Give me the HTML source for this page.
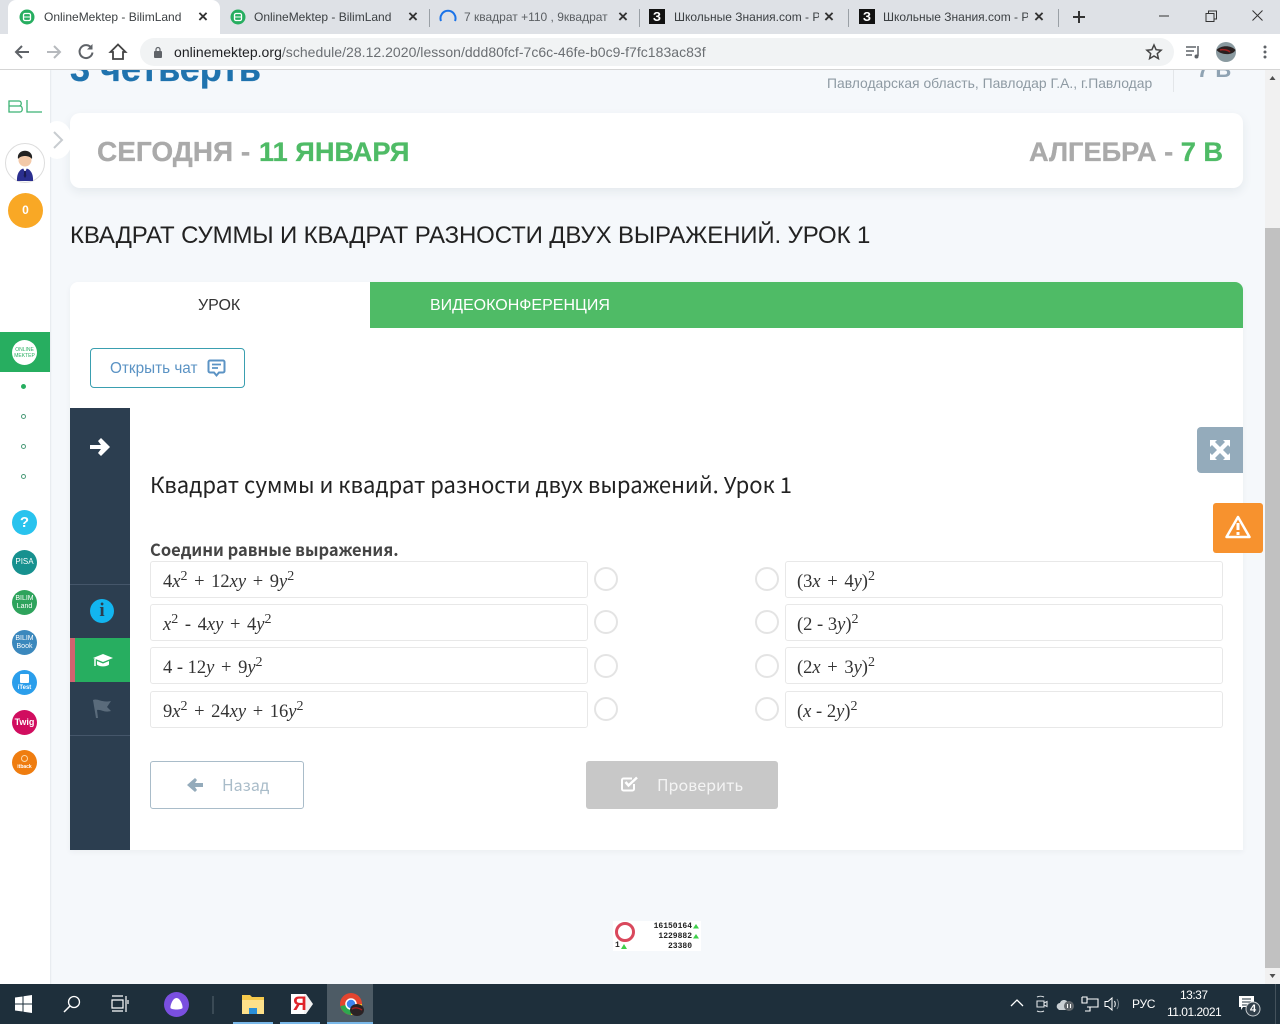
<!DOCTYPE html>
<html><head><meta charset="utf-8"><style>
html,body{margin:0;padding:0;width:1280px;height:1024px;overflow:hidden;background:#f5f8fb;font-family:"Liberation Sans","Noto Sans CJK SC",sans-serif}
.a{position:absolute}
.t{position:absolute;white-space:nowrap}
.tab{position:absolute;top:10px;font-size:12px;color:#3c4043;white-space:nowrap;line-height:14px}
.x{position:absolute;top:8px;font-size:17px;font-weight:bold;color:#333;line-height:18px}
.sep{position:absolute;top:9px;width:1px;height:18px;background:#9aa0a6}
.box{position:absolute;height:35px;background:#fff;border:1px solid #e8e8e8;border-radius:3px;box-sizing:content-box}
.m{position:absolute;left:12px;top:9px;font:18.5px/22px "Liberation Serif",serif;word-spacing:2px;color:#333;white-space:nowrap}
.m i{font-style:italic}
.m sup{font-size:14px;line-height:0;vertical-align:7px}
.n{margin:0 -2px}
.r{position:absolute;width:20px;height:20px;border:2px solid #e4e4e4;border-radius:50%;background:#fff}
.c{position:absolute;width:25px;height:25px;left:12px;border-radius:50%;color:#fff;text-align:center;font-size:7px;line-height:25px;overflow:hidden}
.d{position:absolute;left:21px;border-radius:50%;border:1.5px solid #4a9a78;box-sizing:content-box;width:3px;height:3px}
.tb{letter-spacing:-.5px}
</style></head><body>
<!-- page -->
<div class="a" style="left:0;top:70px;width:1265px;height:914px;background:#f5f8fb;overflow:hidden">
<div class="t" style="left:70px;top:-23px;font-size:36px;font-weight:bold;color:#1f73ae;line-height:44px;-webkit-text-stroke:.3px #1f73ae">3 четверть</div>
<div class="t" style="left:827px;top:4px;font-size:13.9px;color:#8e9aa3;line-height:18px">Павлодарская область, Павлодар Г.А., г.Павлодар</div>
<div class="a" style="left:1173px;top:0;width:1px;height:22px;background:#e3e6e9"></div>
<div class="t" style="left:1197px;top:-13px;font-size:22px;font-weight:bold;color:#8fa3b3;line-height:26px">7 В</div>
</div>
<div class="a" style="left:70px;top:113px;width:1173px;height:75px;background:#fff;border-radius:10px;box-shadow:0 4px 10px rgba(40,60,80,.08)"></div>
<div class="t" style="left:97px;top:136px;font-size:28px;font-weight:bold;color:#aaa;line-height:32px;-webkit-text-stroke:.3px #aaa">СЕГОДНЯ - <span style="color:#4fbb66;-webkit-text-stroke:.3px #4fbb66;font-size:27.2px;margin-left:1px">11 ЯНВАРЯ</span></div>
<div class="t" style="right:57px;top:136px;font-size:27.2px;font-weight:bold;color:#aaa;line-height:32px;-webkit-text-stroke:.3px #aaa">АЛГЕБРА - <span style="color:#4fbb66;-webkit-text-stroke:.3px #4fbb66">7 В</span></div>
<div class="t" style="left:70px;top:222px;font-size:24px;color:#222;line-height:28px;letter-spacing:-.13px">КВАДРАТ СУММЫ И КВАДРАТ РАЗНОСТИ ДВУХ ВЫРАЖЕНИЙ. УРОК 1</div>
<!-- card -->
<div class="a" style="left:70px;top:282px;width:1173px;height:568px;background:#fff;border-radius:8px 8px 0 0;box-shadow:0 2px 6px rgba(40,60,80,.05)"></div>
<div class="a" style="left:370px;top:282px;width:873px;height:46px;background:#4fbb66;border-radius:0 8px 0 0"></div>
<div class="t" style="left:198px;top:297px;font-size:16px;color:#333;line-height:18px">УРОК</div>
<div class="t" style="left:430px;top:297px;font-size:16px;color:#fff;line-height:18px">ВИДЕОКОНФЕРЕНЦИЯ</div>
<div class="a" style="left:90px;top:348px;width:153px;height:38px;border:1px solid #3a9fb0;border-radius:4px"></div>
<div class="t" style="left:110px;top:360px;font-size:15.3px;color:#5b93c4;line-height:18px">Открыть чат</div>
<svg class="a" style="left:207px;top:359px" width="19" height="19" viewBox="0 0 19 19"><path d="M3 1.500h13a1.500 1.500 0 0 1 1.500 1.500v9a1.500 1.500 0 0 1-1.500 1.500h-4l-2.500 3-2.500-3H3A1.500 1.500 0 0 1 1.500 12V3A1.500 1.500 0 0 1 3 1.500z" fill="none" stroke="#5b93c4" stroke-width="2"/><path d="M5 5.500h9M5 9h6" stroke="#5b93c4" stroke-width="1.800"/></svg>
<!-- dark rail -->
<div class="a" style="left:70px;top:408px;width:60px;height:442px;background:#2c3e50"></div>
<svg class="a" style="left:89px;top:437px" width="22" height="20" viewBox="0 0 22 20"><path d="M1 8h11l-3-4 3-3 9 9-9 9-3-3 3-4H1z" fill="#fff"/></svg>
<div class="a" style="left:70px;top:584px;width:60px;height:1px;background:#45566a"></div>
<div class="a" style="left:90px;top:599px;width:24px;height:24px;border-radius:50%;background:#12b5f0;color:#2c3e50;font:bold 19px/24px 'Liberation Serif',serif;text-align:center">i</div>
<div class="a" style="left:70px;top:638px;width:60px;height:44px;background:#27ae60"></div>
<div class="a" style="left:70px;top:638px;width:5px;height:44px;background:#d2626f"></div>
<svg class="a" style="left:92px;top:653px" width="22" height="17" viewBox="0 0 22 17"><path d="M11 1 21 5l-10 4L1 5z" fill="#fff"/><path d="M5 8v3.500c2 2.500 10 2.500 12 0V8l-6 2.500z" fill="#fff"/><path d="M3 6v7" stroke="#fff" stroke-width="1.500"/></svg>
<svg class="a" style="left:91px;top:698px" width="22" height="22" viewBox="0 0 22 22"><path d="M2 2c5-2 8 3 18 1l-4 6 4 4c-7 2-10-2-14-1l1 8H5z" fill="#5a6b7b"/></svg>
<div class="a" style="left:70px;top:735px;width:60px;height:1px;background:#45566a"></div>
<div class="a" style="left:1197px;top:427px;width:46px;height:46px;background:#94abbb;border-radius:4px 0 0 4px"></div>
<svg class="a" style="left:1209px;top:439px" width="22" height="22" viewBox="0 0 22 22"><path d="M1 1h7L6 3l5 5 5-5-2-2h7v7l-2-2-5 5 5 5 2-2v7h-7l2-2-5-5-5 5 2 2H1v-7l2 2 5-5-5-5-2 2z" fill="#fff"/></svg>
<div class="a" style="left:1213px;top:503px;width:50px;height:50px;background:#f7922e;border-radius:3px"></div>
<svg class="a" style="left:1225px;top:515px" width="26" height="24" viewBox="0 0 26 24"><path d="M13 2 24.500 22h-23z" fill="none" stroke="#fff" stroke-width="2.500" stroke-linejoin="round"/><path d="M13 8v7M13 17v3" stroke="#fff" stroke-width="3"/></svg>
<!-- content -->
<div class="t" style="left:150px;top:469px;font-size:22px;color:#222;line-height:30px;font-family:'Noto Sans CJK SC','Liberation Sans',sans-serif">Квадрат суммы и квадрат разности двух выражений. Урок 1</div>
<div class="t" style="left:150px;top:539px;font-size:16.5px;font-weight:bold;color:#444;line-height:20px;font-family:'Noto Sans CJK SC','Liberation Sans',sans-serif">Соедини равные выражения.</div>
<div class="box" style="left:150px;top:561px;width:436px"><div class="m">4<i>x</i><sup>2</sup> + 12<i>xy</i> + 9<i>y</i><sup>2</sup></div></div>
<div class="box" style="left:150px;top:604px;width:436px"><div class="m"><i>x</i><sup>2</sup> - 4<i>xy</i> + 4<i>y</i><sup>2</sup></div></div>
<div class="box" style="left:150px;top:647px;width:436px"><div class="m">4<span class="n"> - </span>12<i>y</i> + 9<i>y</i><sup>2</sup></div></div>
<div class="box" style="left:150px;top:691px;width:436px"><div class="m">9<i>x</i><sup>2</sup> + 24<i>xy</i> + 16<i>y</i><sup>2</sup></div></div>
<div class="box" style="left:785px;top:561px;width:436px"><div class="m" style="left:11px">(3<i>x</i> + 4<i>y</i>)<sup>2</sup></div></div>
<div class="box" style="left:785px;top:604px;width:436px"><div class="m" style="left:11px">(2<span class="n"> - </span>3<i>y</i>)<sup>2</sup></div></div>
<div class="box" style="left:785px;top:647px;width:436px"><div class="m" style="left:11px">(2<i>x</i> + 3<i>y</i>)<sup>2</sup></div></div>
<div class="box" style="left:785px;top:691px;width:436px"><div class="m" style="left:11px">(<i>x</i><span class="n"> - </span>2<i>y</i>)<sup>2</sup></div></div>
<div class="r" style="left:594px;top:567px"></div><div class="r" style="left:594px;top:610px"></div><div class="r" style="left:594px;top:654px"></div><div class="r" style="left:594px;top:697px"></div>
<div class="r" style="left:755px;top:567px"></div><div class="r" style="left:755px;top:610px"></div><div class="r" style="left:755px;top:654px"></div><div class="r" style="left:755px;top:697px"></div>
<div class="a" style="left:150px;top:761px;width:152px;height:46px;border:1px solid #a9bcc9;border-radius:3px;background:#fff"></div>
<svg class="a" style="left:187px;top:778px" width="17" height="14" viewBox="0 0 17 14"><path d="M16 5H8l2-3-2-2-8 7 8 7 2-2-2-3h8z" fill="#94abbb"/></svg>
<div class="t" style="left:222px;top:774px;font-size:16px;color:#a9bcc9;line-height:20px;font-family:'Noto Sans CJK SC','Liberation Sans',sans-serif">Назад</div>
<div class="a" style="left:586px;top:761px;width:192px;height:48px;background:#c8c8c8;border-radius:3px"></div>
<svg class="a" style="left:621px;top:776px" width="18" height="16" viewBox="0 0 18 16"><path d="M13 8v5a1.500 1.500 0 0 1-1.500 1.500h-9A1.500 1.500 0 0 1 1 13V4a1.500 1.500 0 0 1 1.500-1.500H11" fill="none" stroke="#fff" stroke-width="2"/><path d="m4.500 6 3 3.500L16 1.500" fill="none" stroke="#fff" stroke-width="2.500"/></svg>
<div class="t" style="left:657px;top:774px;font-size:16px;color:#f4f4f4;line-height:20px;font-family:'Noto Sans CJK SC','Liberation Sans',sans-serif">Проверить</div>
<!-- counter -->
<div class="a" style="left:613px;top:921px;width:88px;height:30px;background:#fff;border:0 solid #eee"></div>
<div class="a" style="left:615px;top:922px;width:14px;height:14px;border:3px solid #d9485c;border-radius:50%"></div>
<div class="t" style="right:588px;top:922px;font:bold 8px/10px 'Liberation Mono',monospace;color:#222;text-align:right">16150164<br>1229882<br>23380</div>
<div class="t" style="left:615px;top:941px;font:bold 8px/10px 'Liberation Mono',monospace;color:#222">1</div>
<svg class="a" style="left:620px;top:922px" width="80" height="28" viewBox="0 0 80 28"><path d="M73 6.500 76 2l3 4.500zM73 16.500 76 12l3 4.500z" fill="#3ecf4a"/><path d="M1 27l3-5 3 5z" fill="#3ecf4a"/></svg>
<!-- left sidebar -->
<div class="a" style="left:0;top:70px;width:50px;height:914px;background:#fff;box-shadow:1px 0 1px rgba(40,60,80,.08)"></div>
<div class="a" style="left:42px;top:121px;width:30px;height:38px;border-radius:50%;background:#fff"></div>
<svg class="a" style="left:52px;top:131px" width="12" height="18" viewBox="0 0 12 18"><path d="m2 1 8 8-8 8" fill="none" stroke="#c8ccd0" stroke-width="2"/></svg>
<svg class="a" style="left:7px;top:99px" width="36" height="16" viewBox="0 0 36 16"><path d="M2 2h10c3 0 3 5 0 5H2h11c3 0 3 6 0 6H2zM20 1v12h15" fill="none" stroke="#3bb273" stroke-width="1.300"/></svg>
<div class="a" style="left:5px;top:143px;width:38px;height:38px;border:1px solid #ddd;border-radius:50%;background:#fff"></div>
<svg class="a" style="left:5px;top:143px" width="40" height="40" viewBox="0 0 40 40"><circle cx="20" cy="17" r="6.500" fill="#f3c9a8"/><path d="M13 16c-2-11 16-11 14 0-3-4-11-4-14 0z" fill="#222"/><path d="M12 38c-1-17 17-17 16 0z" fill="#2b2f8f"/><path d="m18 25 2 4 2-4z" fill="#fff"/><path d="m19.300 28-.6 5 1.300 2 1.300-2-.6-5z" fill="#181a50"/></svg>
<div class="a" style="left:8px;top:193px;width:35px;height:35px;border-radius:50%;background:#f9a825;color:#fff;font:bold 12px/35px 'Liberation Sans',sans-serif;text-align:center">0</div>
<div class="a" style="left:0;top:332px;width:50px;height:40px;background:#27ae60"></div>
<div class="c" style="top:340px;background:#fff;color:#27ae60;font-size:5px;line-height:6px"><div style="margin-top:7px">ONLINE<br>MEKTEP</div></div>
<div class="d" style="top:384px;background:#27ae60;border-color:#27ae60"></div>
<div class="d" style="top:414px"></div><div class="d" style="top:444px"></div><div class="d" style="top:474px"></div>
<div class="c" style="top:510px;background:#29c3ee;font:bold 15px/25px 'Liberation Sans',sans-serif">?</div>
<div class="c" style="top:550px;background:#17918f;font-size:8px;line-height:23px">PISA</div>
<div class="c" style="top:590px;background:#2ea35c;line-height:7.500px;font-size:7px"><div style="margin-top:5px">BILIM<br>Land</div></div>
<div class="c" style="top:630px;background:#3b88bd;line-height:7.500px;font-size:7px"><div style="margin-top:5px">BILIM<br>Book</div></div>
<div class="c" style="top:670px;background:#2b9eeb;font-size:6px;font-weight:bold;line-height:6px"><div style="position:absolute;left:8px;top:4px;width:9px;height:9px;background:#fff;border-radius:1px"></div><div style="margin-top:15px">iTest</div></div>
<div class="c" style="top:710px;background:#d10d5f;font-size:9px;font-weight:bold">Twig</div>
<div class="c" style="top:750px;background:#ef7d10;line-height:6px;font-size:5px;font-weight:bold"><div style="margin-top:14px">itback</div><div style="position:absolute;left:9px;top:5px;width:7px;height:7px;border:1px solid #fbd9a8;border-radius:50%;box-sizing:border-box"></div></div>
<!-- scrollbar -->
<div class="a" style="left:1265px;top:70px;width:15px;height:914px;background:#f1f1f1"></div>
<div class="a" style="left:1265px;top:228px;width:15px;height:740px;background:#c1c1c1"></div>
<svg class="a" style="left:1265px;top:73px" width="15" height="10"><path d="m4.500 7 3-4 3 4z" fill="#505050"/></svg>
<svg class="a" style="left:1265px;top:971px" width="15" height="10"><path d="m4.500 3 3 4 3-4z" fill="#505050"/></svg>
<!-- chrome -->
<div class="a" style="left:0;top:0;width:1280px;height:34px;background:#dee1e6"></div>
<div class="a" style="left:8px;top:0;width:212px;height:34px;background:#fff;border-radius:8px 8px 0 0"></div>
<div class="a" style="left:0;top:34px;width:1280px;height:36px;background:#fff;border-bottom:1px solid #d5d5d5;box-sizing:border-box"></div>
<svg class="a" style="left:19px;top:9px" width="16" height="16" viewBox="0 0 16 16"><circle cx="8" cy="8" r="7.500" fill="#27ae60"/><rect x="4.500" y="4.500" width="7" height="7" rx="1.500" fill="none" stroke="#fff" stroke-width="1.300"/><path d="M5 8h6" stroke="#fff"/></svg>
<div class="tab" style="left:44px">OnlineMektep - BilimLand</div><div class="x" style="left:198px">×</div>
<svg class="a" style="left:230px;top:9px" width="16" height="16" viewBox="0 0 16 16"><circle cx="8" cy="8" r="7.500" fill="#27ae60"/><rect x="4.500" y="4.500" width="7" height="7" rx="1.500" fill="none" stroke="#fff" stroke-width="1.300"/><path d="M5 8h6" stroke="#fff"/></svg>
<div class="tab" style="left:254px">OnlineMektep - BilimLand</div><div class="x" style="left:408px">×</div>
<div class="sep" style="left:429px"></div>
<svg class="a" style="left:439px;top:8px" width="18" height="18" viewBox="0 0 18 18"><path d="M2 13A7.500 7.500 0 1 1 16 13" fill="none" stroke="#1a73e8" stroke-width="2"/></svg>
<div class="tab" style="left:464px;width:144px;overflow:hidden;color:#5a5e62">7 квадрат +110 , 9квадрат</div><div class="x" style="left:618px">×</div>
<div class="sep" style="left:639px"></div>
<div class="a" style="left:649px;top:9px;width:16px;height:15px;background:#111;color:#fff;font:bold 13px/15px 'Liberation Sans',sans-serif;text-align:center">З</div>
<div class="tab" style="left:674px;width:145px;overflow:hidden">Школьные Знания.com - Реши</div><div class="x" style="left:824px">×</div>
<div class="sep" style="left:848px"></div>
<div class="a" style="left:859px;top:9px;width:16px;height:15px;background:#111;color:#fff;font:bold 13px/15px 'Liberation Sans',sans-serif;text-align:center">З</div>
<div class="tab" style="left:883px;width:145px;overflow:hidden">Школьные Знания.com - Реши</div><div class="x" style="left:1034px">×</div>
<div class="sep" style="left:1058px"></div>
<svg class="a" style="left:1071px;top:9px" width="16" height="16"><path d="M8 2v12M2 8h12" stroke="#333" stroke-width="2"/></svg>
<svg class="a" style="left:1150px;top:7px" width="130" height="18" viewBox="0 0 130 18"><path d="M9 9h10" stroke="#333"/><path d="M56 6.500h8v8h-8zM58.500 6.500V4h8v8H64" fill="none" stroke="#333"/><path d="m102.500 3.500 10 10m0-10-10 10" stroke="#333"/></svg>
<svg class="a" style="left:12px;top:42px" width="20" height="20" viewBox="0 0 20 20"><path d="M17 10H4m6-6-6 6 6 6" fill="none" stroke="#5f6368" stroke-width="2"/></svg>
<svg class="a" style="left:44px;top:42px" width="20" height="20" viewBox="0 0 20 20"><path d="M3 10h13m-6-6 6 6-6 6" fill="none" stroke="#b6b9bd" stroke-width="2"/></svg>
<svg class="a" style="left:76px;top:42px" width="20" height="20" viewBox="0 0 20 20"><path d="M15.500 6A6.500 6.500 0 1 0 16.500 10.500" fill="none" stroke="#5f6368" stroke-width="2"/><path d="M16.500 2v5.500H11z" fill="#5f6368"/></svg>
<svg class="a" style="left:108px;top:42px" width="20" height="20" viewBox="0 0 20 20"><path d="M10 2.500 2.500 10H5v7h10v-7h2.500z" fill="none" stroke="#444" stroke-width="1.800"/></svg>
<div class="a" style="left:140px;top:38px;width:1034px;height:28px;background:#f1f3f4;border-radius:14px"></div>
<svg class="a" style="left:152px;top:46px" width="12" height="13" viewBox="0 0 12 13"><rect x="2" y="5" width="8" height="7" rx="1" fill="#5f6368"/><path d="M4 5V3.500a2 2 0 0 1 4 0V5" fill="none" stroke="#5f6368" stroke-width="1.200"/></svg>
<div class="t" style="left:174px;top:44px;font-size:14px;line-height:16px;color:#6b6f73;letter-spacing:.03px"><span style="color:#202124">onlinemektep.org</span>/schedule/28.12.2020/lesson/ddd80fcf-7c6c-46fe-b0c9-f7fc183ac83f</div>
<svg class="a" style="left:1145px;top:43px" width="18" height="18" viewBox="0 0 18 18"><path d="m9 2 2.100 4.700 5 .5-3.800 3.400 1.100 5L9 13l-4.400 2.600 1.100-5L1.900 7.200l5-.5z" fill="none" stroke="#444" stroke-width="1.500"/></svg>
<svg class="a" style="left:1185px;top:44px" width="16" height="16" viewBox="0 0 16 16"><path d="M1 3h10M1 7h8M1 11h6" stroke="#5f6368" stroke-width="1.400"/><path d="M13 2v10" stroke="#5f6368" stroke-width="1.500"/><circle cx="11.500" cy="12.500" r="2" fill="#5f6368"/></svg>
<svg class="a" style="left:1215px;top:41px" width="22" height="22" viewBox="0 0 22 22"><circle cx="11" cy="11" r="10" fill="#8a9aa0"/><path d="M1.500 9C6 4 16 4 20.500 9c-3 6-15 5-19 0z" fill="#2a2020"/><path d="M5 9c3-1 8 0 10 2" stroke="#a02020" stroke-width="1.500" fill="none"/></svg>
<svg class="a" style="left:1262px;top:44px" width="6" height="16"><circle cx="3" cy="3" r="1.500" fill="#5f6368"/><circle cx="3" cy="8" r="1.500" fill="#5f6368"/><circle cx="3" cy="13" r="1.500" fill="#5f6368"/></svg>
<!-- taskbar -->
<div class="a" style="left:0;top:984px;width:1280px;height:40px;background:#1e2f3b"></div>
<div class="a" style="left:327px;top:984px;width:46px;height:40px;background:#4d5b65"></div>
<svg class="a" style="left:15px;top:995px" width="18" height="18" viewBox="0 0 18 18"><path d="M0 2.500 7.500 1.500v7H0zM8.500 1.300 17 0v8.500H8.500zM0 9.500h7.500v7L0 15.500zM8.500 9.500H17V18l-8.500-1.200z" fill="#fff"/></svg>
<svg class="a" style="left:63px;top:995px" width="18" height="18" viewBox="0 0 18 18"><circle cx="11" cy="7" r="5.500" fill="none" stroke="#fff" stroke-width="1.300"/><path d="M7 11 1 17" stroke="#fff" stroke-width="1.500"/></svg>
<svg class="a" style="left:111px;top:995px" width="18" height="18" viewBox="0 0 18 18"><path d="M1 1h11M1 16h11M1 5h11v8H1zM15 1v16M17 5v4" fill="none" stroke="#fff" stroke-width="1.200"/></svg>
<div class="a" style="left:164px;top:992px;width:25px;height:25px;border-radius:50%;background:#7a4fe0"></div>
<svg class="a" style="left:168px;top:996px" width="17" height="17" viewBox="0 0 17 17"><path d="M8.500 2c4 0 6.500 8 6 10-1 2-11 2-12 0-.5-2 2-10 6-10z" fill="#fff"/></svg>
<div class="a" style="left:212px;top:996px;width:2px;height:18px;background:#3a4a55"></div>
<svg class="a" style="left:241px;top:993px" width="24" height="22" viewBox="0 0 24 22"><path d="M1 2h8l2 2h12v17H1z" fill="#f5c94c"/><path d="M1 7h22v14H1z" fill="#fde08a"/><path d="M8 15h8v6H8z" fill="#2a8fd8"/></svg>
<div class="a" style="left:233px;top:1022px;width:40px;height:2px;background:#7ab8e8"></div>
<svg class="a" style="left:290px;top:992px" width="24" height="24" viewBox="0 0 24 24"><path d="M1 2h15l7 10-7 10H1z" fill="#f2f2f2"/><path d="M1 2h13v20H1z" fill="#fff"/></svg>
<div class="t" style="left:293px;top:994px;font:bold 19px/22px 'Liberation Sans',sans-serif;color:#e0242a">Я</div>
<div class="a" style="left:280px;top:1022px;width:40px;height:2px;background:#7ab8e8"></div>
<svg class="a" style="left:339px;top:992px" width="26" height="26" viewBox="0 0 26 26"><circle cx="12" cy="12" r="11" fill="#e5452f"/><path d="M12 12 1.500 14A11 11 0 0 0 12 23z" fill="#2da94f"/><path d="M12 12 23 12A11 11 0 0 1 12 23z" fill="#f8c52c"/><circle cx="12" cy="12" r="5" fill="#3d84f0" stroke="#fff" stroke-width="1.500"/><ellipse cx="18" cy="18" rx="7" ry="6" fill="#2a2224"/><path d="M13 17c3-2 7-1 10 1" stroke="#a02020" stroke-width="1.500" fill="none"/></svg>
<div class="a" style="left:327px;top:1022px;width:46px;height:2px;background:#7ab8e8"></div>
<svg class="a" style="left:1010px;top:998px" width="14" height="10"><path d="m1 8 6-6 6 6" fill="none" stroke="#fff" stroke-width="1.300"/></svg>
<svg class="a" style="left:1034px;top:995px" width="15" height="18" viewBox="0 0 15 18"><path d="M3 6h7v6H3zM10 8l3-1.500v5L10 10zM3 2c2-1 5-1 7 0M3 16c2 1 5 1 7 0" fill="none" stroke="#dfe3e6" stroke-width="1.100"/></svg>
<svg class="a" style="left:1056px;top:996px" width="18" height="16" viewBox="0 0 18 16"><path d="M1 12c-1-3 1-5 3-5 1-4 7-4 8 0l-2 7H3z" fill="#c9cfd3"/><circle cx="13" cy="10" r="5" fill="#60666b"/><path d="M11.500 8v4M14.500 8v4" stroke="#fff"/></svg>
<svg class="a" style="left:1081px;top:996px" width="18" height="17" viewBox="0 0 18 17"><path d="M1 1h5v3M6 3h11v8H6M9 11v4H4M1 1v6h5V4" fill="none" stroke="#fff" stroke-width="1.100"/></svg>
<svg class="a" style="left:1104px;top:996px" width="18" height="16" viewBox="0 0 18 16"><path d="M1 5.500h3L8 2v12L4 10.500H1z" fill="none" stroke="#fff"/><path d="M10.500 5c1 2 1 4 0 6" stroke="#fff" fill="none"/><path d="M13 3c2 3 2 7 0 10" stroke="#7d8890" fill="none"/></svg>
<div class="t tb" style="left:1132px;top:997px;font-size:12px;line-height:14px;color:#fff;letter-spacing:-.3px">РУС</div>
<div class="t tb" style="left:1180px;top:988px;font-size:12px;line-height:14px;color:#fff">13:37</div>
<div class="t tb" style="left:1167px;top:1005px;font-size:12px;line-height:14px;color:#fff">11.01.2021</div>
<svg class="a" style="left:1238px;top:994px" width="24" height="24" viewBox="0 0 24 24"><path d="M1 2h15v11H5l-2 3v-3H1z" fill="#fff"/><path d="M4 5h9M4 8h9M4 11h6" stroke="#1e2f3b"/><circle cx="15" cy="15" r="7" fill="#33414c" stroke="#c8cdd0"/></svg>
<div class="t" style="left:1250px;top:1003px;font:bold 11px/13px 'Liberation Sans',sans-serif;color:#fff">4</div>
<div class="a" style="left:1275px;top:984px;width:1px;height:40px;background:#44525c"></div>
</body></html>
